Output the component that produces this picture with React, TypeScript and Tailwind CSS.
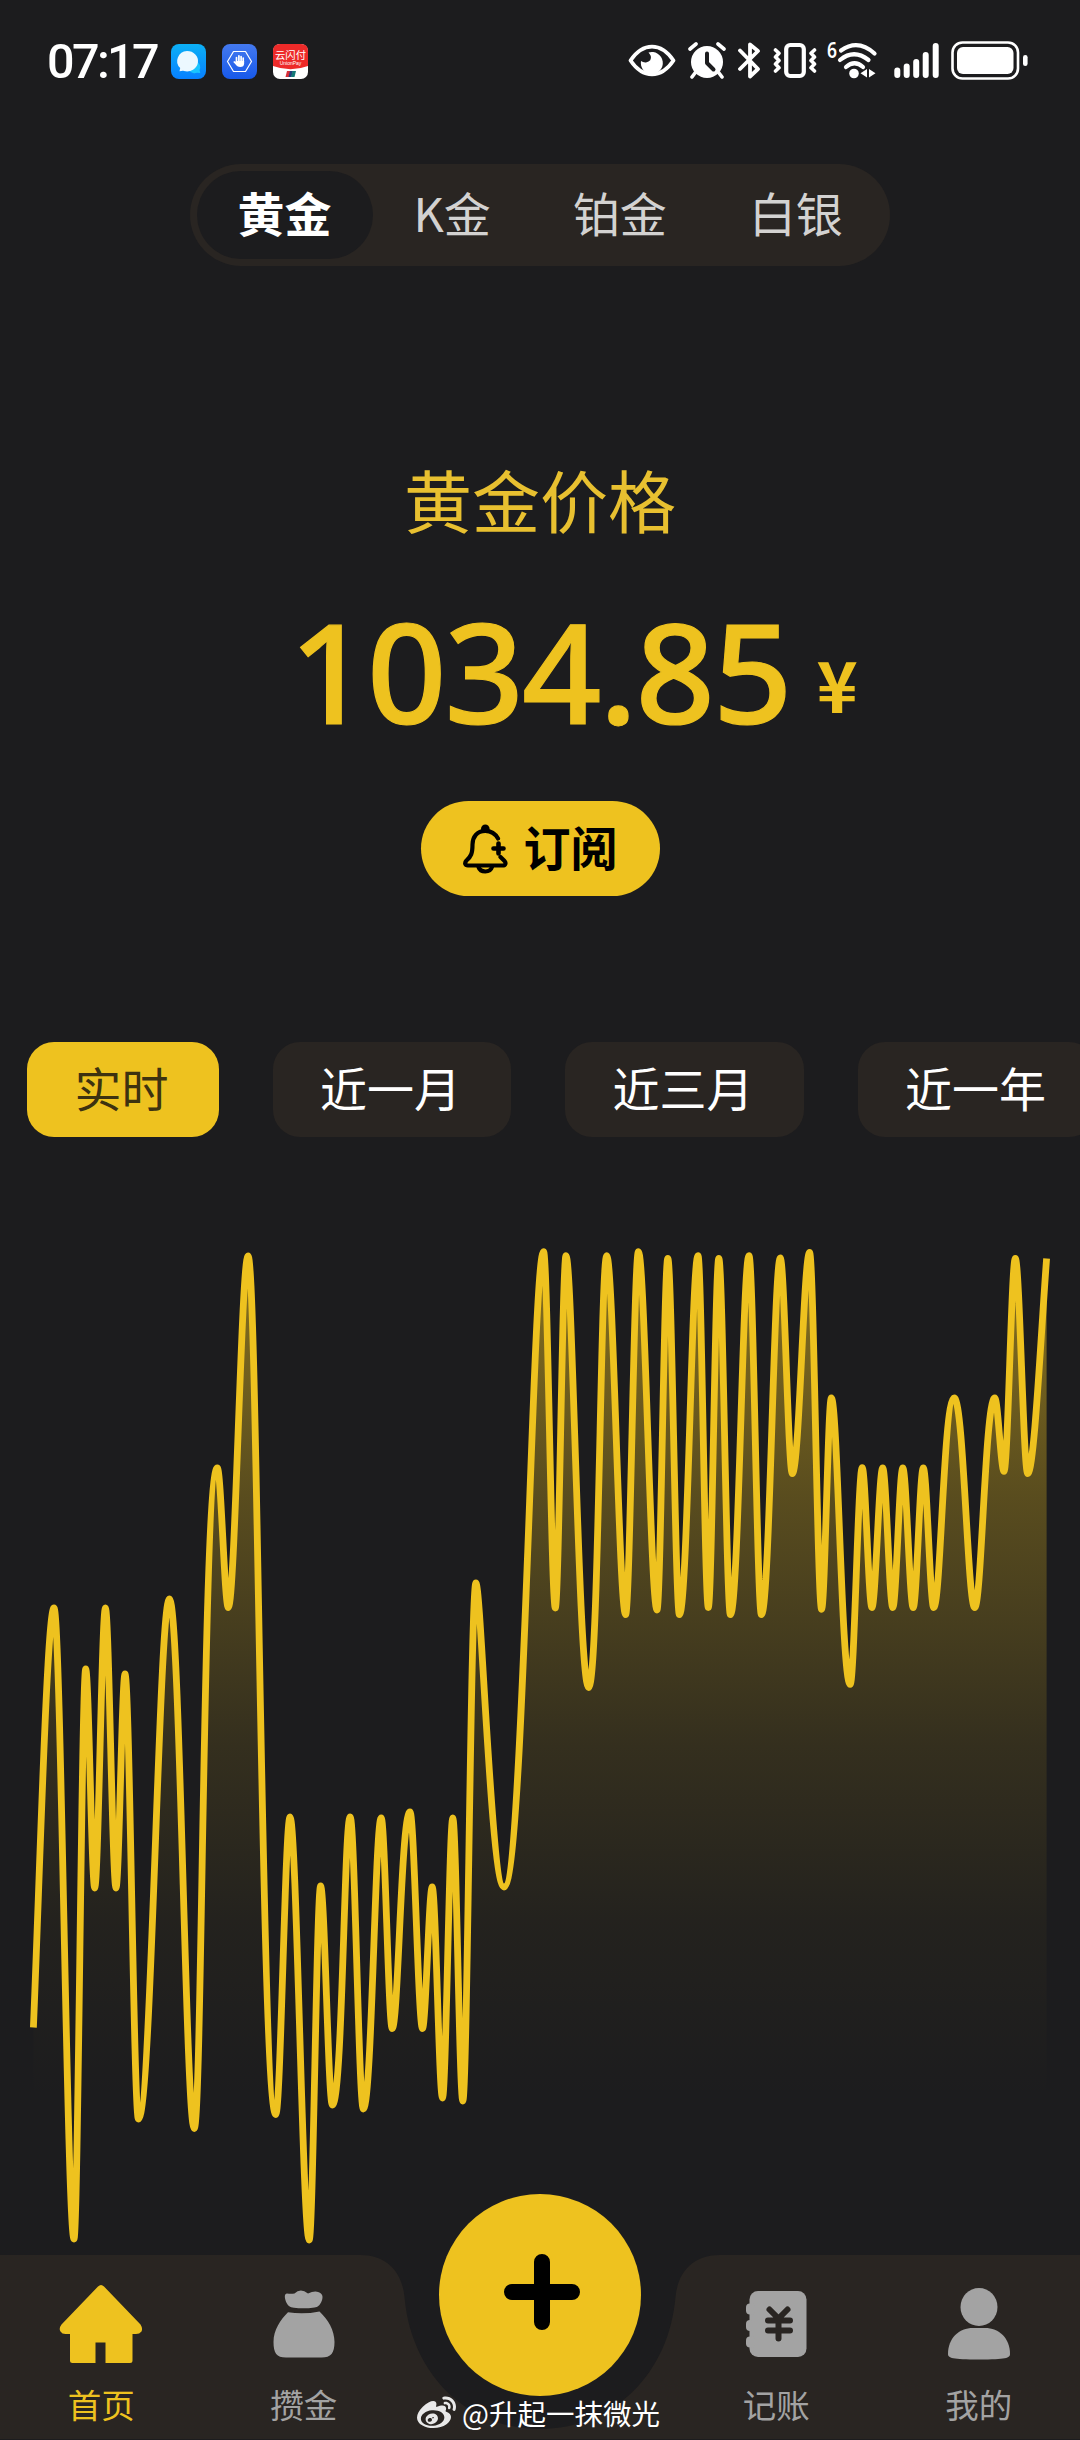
import React, { useState } from "react";
import { FaWeibo } from "react-icons/fa";

const metals = ["黄金", "K金", "铂金", "白银"];
const ranges = ["实时", "近一月", "近三月", "近一年"];

// turning points of the price line: x, y, then how far the curve stays flat
// before and after the point (share of the step, 0.34 when left out)
const points: [number, number, number?, number?][] = [
    [33.4, 2027.5], [54, 1608], [74, 2239], [85.7, 1669], [94.7, 1888], [105.4, 1608], [116, 1888],
    [125, 1674], [138.4, 2119, 0.34, 0.42], [169.4, 1599, 0.34, 0.42], [194.2, 2128.5], [217.3, 1468, 0.62],
    [228.3, 1607.5], [248, 1256], [275.8, 2114.5, 0.52], [290, 1817], [309.2, 2240], [320.6, 1886],
    [332.3, 2105, 0.34, 0.58], [350.2, 1817], [363.3, 2109, 0.34, 0.48], [381.2, 1818], [392.2, 2028.5],
    [410, 1812, 0.5], [422.5, 2028.5], [432.2, 1887], [442.5, 2098], [452.8, 1818], [462.8, 2101],
    [475.9, 1583, 0.4, 0.18], [504, 1887, 0.46, 0.5], [543.6, 1251.6, 0.28], [555.3, 1608],
    [566, 1255.6, 0.34, 0.28], [588.6, 1687.5, 0.44, 0.56], [606.7, 1255.6], [625.6, 1614.7],
    [638.4, 1251.6], [657, 1610], [667.8, 1258.3], [679.4, 1614.7, 0.34, 0.44], [698, 1255.6],
    [708.3, 1607.5], [718.8, 1258.3], [730.4, 1614.7, 0.34, 0.44], [749, 1255.6],
    [761.4, 1614.7, 0.34, 0.44], [780.3, 1258], [792.3, 1473.6, 0.34, 0.4], [809.6, 1252.5],
    [821.6, 1609.3], [831.3, 1398], [850.2, 1684.4, 0.46], [862.2, 1467.7], [871.9, 1607.5],
    [882.7, 1468], [892.8, 1607.5], [902.8, 1468], [913.2, 1607.5], [923.3, 1468], [933.7, 1607.5],
    [954.2, 1398, 0.52, 0.46], [974.7, 1607.5], [994.8, 1398, 0.48], [1004, 1471.4], [1015.3, 1258.3],
    [1027.7, 1473.6], [1046.6, 1258.4],
];

function buildLine() {
    let d = `M${points[0][0]} ${points[0][1]}`;
    for (let i = 1; i < points.length; i++) {
        const [x0, y0, , out = 0.34] = points[i - 1];
        const [x1, y1, into = 0.34] = points[i];
        const dx = x1 - x0;
        const dy = y1 - y0;
        const first = i === 1;
        const last = i === points.length - 1;
        const c1 = first ? [x0 + dx * 0.3, y0 + dy * 0.35] : [x0 + dx * out, y0];
        const c2 = last ? [x1 - dx * 0.3, y1 - dy * 0.35] : [x1 - dx * into, y1];
        d += `C${c1[0]} ${c1[1]} ${c2[0]} ${c2[1]} ${x1} ${y1}`;
    }
    return d;
}

function StatusBar() {
    return (
        <div className="h-[122px] pl-[47px] pr-[52px] flex items-start justify-between text-white">
            <div className="flex items-center pt-[41px] h-[82px]">
                <span className="w-[124px] text-[48.5px] leading-[40px] font-medium tracking-[-2.6px] font-['Roboto',sans-serif]">
                    07:17
                </span>
                <div className="flex gap-4">
                    <svg className="w-[35px] h-[35px]" viewBox="0 0 35 35">
                        <defs>
                            <linearGradient id="msg" x1="0" y1="0" x2="0" y2="1">
                                <stop offset="0" stopColor="#0cb0f6" />
                                <stop offset="1" stopColor="#0780ff" />
                            </linearGradient>
                        </defs>
                        <rect width="35" height="35" rx="8" fill="url(#msg)" />
                        <path d="M22 29a6 6 0 1 1 6.500-3l.8 3-3.300-.2a7 7 0 0 1-4 .2z" fill="#19c4ff" />
                        <path d="M16 7a11 10.200 0 1 1-3 20c-1.500-.4-2.500 0-4.500.3l.7-3.300A10.500 10 0 0 1 16 7z" fill="#ecf8ff" />
                    </svg>
                    <svg className="w-[35px] h-[35px]" viewBox="0 0 35 35">
                        <defs>
                            <linearGradient id="hand" x1="0" y1="0" x2="0" y2="1">
                                <stop offset="0" stopColor="#4479ef" />
                                <stop offset="1" stopColor="#1759ea" />
                            </linearGradient>
                        </defs>
                        <rect width="35" height="35" rx="8" fill="url(#hand)" />
                        <path d="M11.500 7.500h12l6 10-6 10h-12l-6-10z" fill="none" stroke="#fff" strokeWidth="1.200" strokeLinejoin="round" />
                        <path d="M14.500 18v-4.500M16.900 17v-5.200M19.100 17v-4.500M21.200 18v-4M12.300 18l3 3" stroke="#fff" strokeWidth="1.700" strokeLinecap="round" />
                        <path d="M13.600 17h8.500v2.500q0 3.500-4 3.500-2.600 0-4.200-2.500z" fill="#fff" />
                    </svg>
                    <svg className="w-[35px] h-[35px]" viewBox="0 0 35 35">
                        <rect width="35" height="35" rx="7" fill="#fff" />
                        <path d="M0 22V7q0-7 7-7h21q7 0 7 7v15q-17.500 6.500-35 0z" fill="#ed2a29" />
                        <text x="17.500" y="14.800" fontSize="10.300" textAnchor="middle" fill="#fff" fontFamily="Noto Sans CJK SC, sans-serif">云闪付</text>
                        <text x="17.500" y="21" fontSize="5" textAnchor="middle" fill="#fff" fontFamily="Liberation Sans, sans-serif">UnionPay</text>
                        <path d="M14 27h4l-1.500 6H12.500z" fill="#d8303a" />
                        <path d="M17 27h3l-1.500 6h-3z" fill="#253d7d" />
                        <path d="M19.500 27h3.500L21.500 33h-3.500z" fill="#147a78" />
                    </svg>
                </div>
            </div>

            <div className="flex items-start pt-[41px]">
                <svg className="w-[48px] h-[40px] mr-3" viewBox="0 0 48 40" fill="none">
                    <path d="M2.500 19.500C15 1 33 1 45.500 19.500 33 38 15 38 2.500 19.500z" stroke="#fff" strokeWidth="3.800" strokeLinejoin="round" />
                    <path d="M20.500 11.500A11 11 0 1 1 13 20q2 1.600 5 1.400 6-1 4.800-6.400-.8-2-2.300-3.500z" fill="#fff" />
                </svg>
                <svg className="w-[38px] h-[40px] mr-3" viewBox="0 0 38 40" fill="none">
                    <circle cx="19" cy="21" r="16" fill="#fff" />
                    <path d="M2 8l6-5M36 8l-6-5M7 32l-3 4M31 32l3 4" stroke="#fff" strokeWidth="3.600" strokeLinecap="round" />
                    <path d="M19 12.500v9.500l6.500 6.500" stroke="#1c1c1e" strokeWidth="4" strokeLinecap="round" strokeLinejoin="round" />
                </svg>
                <svg className="w-[23px] h-[40px] mr-3" viewBox="0 0 23 40" fill="none">
                    <path d="M2 9.500L20 28l-8 7.500V22M2 28L20 10l-8-6.500V19" stroke="#fff" strokeWidth="3.800" strokeLinecap="round" strokeLinejoin="round" />
                </svg>
                <svg className="w-[44px] h-[40px] mr-[10px]" viewBox="0 0 44 40" fill="none">
                    <rect x="13.200" y="4" width="17.600" height="31" rx="4" stroke="#fff" strokeWidth="4.200" />
                    <path d="M2.500 9l3.500 3.300-3.500 3.600 3.500 3.600-3.500 3.600 3.500 3.600L2.500 30" stroke="#fff" strokeWidth="3.600" strokeLinecap="round" strokeLinejoin="round" />
                    <path d="M41.500 9L38 12.300l3.500 3.600-3.500 3.600 3.500 3.600-3.500 3.600 3.500 3.300" stroke="#fff" strokeWidth="3.600" strokeLinecap="round" strokeLinejoin="round" />
                </svg>
                <svg className="w-[50px] h-[40px] mr-[17px] overflow-visible" viewBox="0 0 50 40" fill="none">
                    <text x="0" y="17" fontSize="22" fontWeight="600" fill="#fff" fontFamily="Noto Sans, sans-serif" textLength="10" lengthAdjust="spacingAndGlyphs">6</text>
                    <path d="M14 9.500Q31-2.500 47.500 12.500M13 19Q27 7.500 41.500 19M19 26q8.500-7.500 17 0" stroke="#fff" strokeWidth="4.200" strokeLinecap="round" />
                    <circle cx="27" cy="32.500" r="4.800" fill="#fff" />
                    <path d="M40 28v8.500l-6.500-4.200zM42 28v8.500l6.500-4.200z" fill="#fff" />
                </svg>
                <svg className="w-[45px] h-[40px] mr-3" viewBox="0 0 45 40">
                    <path d="M3.300 29.500v4.500M12.700 25.500v8.500M22.200 21v13M31.700 14v20M41.700 5v29" stroke="#fff" strokeWidth="6" strokeLinecap="round" />
                </svg>
                <svg className="w-[77px] h-[40px]" viewBox="0 0 77 40" fill="none">
                    <rect x="1.500" y="1.500" width="65.500" height="36" rx="10" stroke="#fff" strokeWidth="2.600" />
                    <rect x="6" y="6" width="56.500" height="27" rx="6" fill="#fff" />
                    <rect x="72" y="14" width="4.600" height="11" rx="2.300" fill="#fff" />
                </svg>
            </div>
        </div>
    );
}

function BellIcon() {
    return (
        <svg className="w-[45px] h-[50px]" viewBox="0 0 45 50" fill="none" stroke="#000" strokeWidth="4.200" strokeLinecap="round" strokeLinejoin="round">
            <path d="M35 14.500C32 9 27.500 6.800 22.300 6.800 14 6.800 9.500 13 9.500 20.500c0 9-1.500 12-6 16-2.300 2.500-1.500 5 1.500 5h34.500c3 0 4-2.500 1.800-4.800L37.500 33" />
            <path d="M35.500 19.500v10M30.500 24.500h10" strokeWidth="4.600" />
            <circle cx="22.300" cy="4.800" r="4.300" fill="#000" stroke="none" />
            <path d="M15.500 43q1.500 4.500 6.800 4.500T29 43" />
        </svg>
    );
}

function Chart() {
    const line = buildLine();
    return (
        <svg className="block w-[1080px] h-[1025px]" viewBox="0 1230 1080 1025" fill="none">
            <defs>
                <linearGradient id="area" gradientUnits="userSpaceOnUse" x1="0" y1="1251" x2="0" y2="2240">
                    <stop offset="0" stopColor="#eec21f" stopOpacity="0.52" />
                    <stop offset="0.25" stopColor="#eec21f" stopOpacity="0.29" />
                    <stop offset="0.5" stopColor="#eec21f" stopOpacity="0.115" />
                    <stop offset="0.68" stopColor="#eec21f" stopOpacity="0.035" />
                    <stop offset="0.86" stopColor="#eec21f" stopOpacity="0" />
                </linearGradient>
            </defs>
            <path d={`${line}V2240H33.400Z`} fill="url(#area)" />
            <path d={line} stroke="#eec21f" strokeWidth="6.800" strokeLinejoin="round" />
        </svg>
    );
}

function NavItem({ label, active, children }: { label: string; active?: boolean; children: React.ReactNode }) {
    return (
        <button
            type="button"
            className={`w-[202.5px] flex flex-col items-center pt-[26px] ${active ? "text-[#eec21f]" : "text-[#a3a3a3]"}`}
        >
            {children}
            <span className="mt-[15px] text-[33.5px] leading-[40px]">{label}</span>
        </button>
    );
}

function BottomNav() {
    return (
        <nav className="relative h-[185px] flex">
            <svg className="absolute inset-0 w-[1080px] h-[184px]" viewBox="0 0 1080 184">
                <path
                    d="M0 0H360C386 0 402 16 404.500 42C411 118 466 174 540 174S669 118 675.500 42C678 16 694 0 720 0H1080V184H0Z"
                    fill="#292522"
                />
            </svg>
            <div className="relative flex w-full">
                <NavItem label="首页" active>
                    <svg className="w-[84px] h-[88px]" viewBox="0 0 84 88" fill="currentColor">
                        <path d="M39 5.500q3-3 6 0l36.500 38q2.500 4 1 7-2 2.500-5.500 2.500h-3.500v26.500q0 2.500-2.500 2.500H46.500V61.500h-10V82H13.500Q11 82 11 79.500V53H6.500Q3 53 1.500 50.500q-2-3 1-7z" />
                    </svg>
                </NavItem>
                <NavItem label="攒金">
                    <svg className="w-[62px] h-[88px]" viewBox="0 0 62 88" fill="currentColor">
                        <path d="M14 12.500q4 .6 7.500 0 6-6 13.500 0 5-2.400 9-1.800c5.500.8 6.500 5 4.800 9-2 5-4 6.200-7.300 6.800q-11 1.600-20.500.2c-4-.4-6.500-2-8.200-6.500-1.500-4.500-1.300-7.500 1.200-7.700z" />
                        <path d="M15 31.200q15.500 2.600 31.500-.8C55 38.500 61.500 49 61.500 61c0 11-3.500 15.500-13 15.500H13C3.500 76.500.500 72 .500 61 .500 49 7.500 38.500 15 31.200z" />
                    </svg>
                </NavItem>
                <div className="w-[270px]" />
                <NavItem label="记账">
                    <svg className="w-[62px] h-[88px]" viewBox="0 0 62 88" fill="currentColor">
                        <rect x="4.500" y="10" width="57" height="66" rx="8.500" />
                        <rect x="1" y="22.500" width="9" height="11" rx="4" />
                        <rect x="1" y="39" width="9" height="11" rx="4" />
                        <rect x="1" y="55.500" width="9" height="11" rx="4" />
                        <path d="M24.500 28.500L33.500 37.500 42.500 28.500M23 39.500h22M23 49.500h22M33.500 37v20.500" fill="none" stroke="#292522" strokeWidth="6" strokeLinecap="round" />
                    </svg>
                </NavItem>
                <NavItem label="我的">
                    <svg className="w-[62px] h-[88px]" viewBox="0 0 62 88" fill="currentColor">
                        <ellipse cx="31" cy="26" rx="18.500" ry="19" />
                        <path d="M25 47h12c14 0 25 10 25 26 0 4-4 5.500-31 5.500S0 77 0 73c0-16 11-26 25-26z" />
                    </svg>
                </NavItem>
            </div>

            <button
                type="button"
                className="absolute left-[439px] -top-[61px] w-[202px] h-[202px] rounded-full bg-[#eec21f] flex items-center justify-center"
            >
                <svg className="w-[80px] h-[80px] ml-[4px] -mt-[6px]" viewBox="0 0 80 80">
                    <path d="M40 10v60M10 40h60" stroke="#000" strokeWidth="16" strokeLinecap="round" />
                </svg>
            </button>

            <div className="absolute left-[417px] top-[138px] flex items-center gap-[6px] text-white text-[28.5px] leading-[40px] whitespace-nowrap">
                <FaWeibo className="w-[39px] h-[39px] text-[#e8e8e8]" />
                <span>@升起一抹微光</span>
            </div>
        </nav>
    );
}

function App() {
    const [metal, setMetal] = useState("黄金");
    const [range, setRange] = useState("实时");

    return (
        <div className="w-[1080px] h-[2440px] overflow-hidden flex flex-col bg-[#1c1c1e] font-['Noto_Sans_CJK_SC',sans-serif]">
            <StatusBar />

            {/* Metal tabs */}
            <div className="mt-[42px] mx-auto w-[700px] h-[102px] p-[7px] rounded-full bg-[#292522] flex">
                {metals.map((m) => (
                    <button
                        key={m}
                        type="button"
                        onClick={() => setMetal(m)}
                        className={`h-[88px] pl-[40.5px] pr-[41.5px] pb-[7px] rounded-full text-[47px] leading-none whitespace-nowrap ${
                            m === metal ? "bg-[#1c1c1e] text-white font-bold" : "text-[#d3d2d1]"
                        }`}
                    >
                        {m}
                    </button>
                ))}
            </div>

            {/* Price */}
            <div className="flex flex-col items-center text-[#eec21f]">
                <h1 className="mt-[183px] text-[68px] leading-[100px] text-[#e8c030]">{metal}价格</h1>
                <div className="relative mt-[51px] h-[140px] flex items-center">
                    <span className="text-[139px] leading-[140px] font-medium tracking-[-2px] font-['Noto_Sans',sans-serif] [-webkit-text-stroke:1.2px_#eec21f]">
                        1034.85
                    </span>
                    <span className="absolute left-full bottom-[17px] ml-[26px] text-[70px] leading-[80px] font-bold">¥</span>
                </div>
                <button
                    type="button"
                    className="mt-[61px] w-[239px] h-[95px] rounded-full bg-[#eec21f] text-black flex items-center justify-center gap-[16px]"
                >
                    <BellIcon />
                    <span className="pb-[7px] text-[47px] leading-none font-bold">订阅</span>
                </button>
            </div>

            {/* Range chips */}
            <div className="mt-[146px] pl-[27px] flex gap-[54px]">
                {ranges.map((r) => (
                    <button
                        key={r}
                        type="button"
                        onClick={() => setRange(r)}
                        className={`shrink-0 h-[95px] pl-[47.5px] pr-[50px] pb-[7px] rounded-[27px] text-[47px] leading-none ${
                            r === range ? "bg-[#eec21f] text-[#3d3210]" : "bg-[#292522] text-white"
                        }`}
                    >
                        {r}
                    </button>
                ))}
            </div>

            <div className="mt-auto">
                <Chart />
                <BottomNav />
            </div>
        </div>
    );
}

export default App;
